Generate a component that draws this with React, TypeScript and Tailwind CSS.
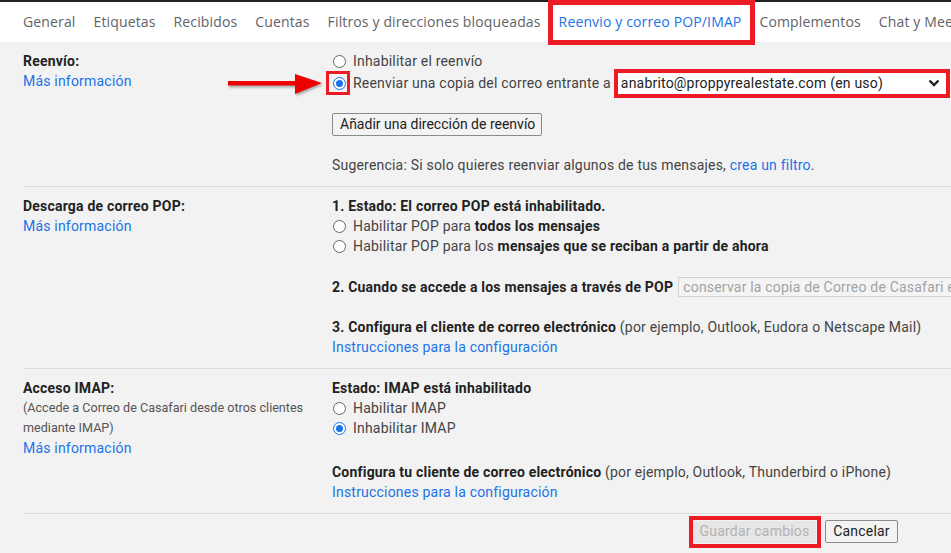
import type { ReactNode } from "react";

const tabs = [
  "General",
  "Etiquetas",
  "Recibidos",
  "Cuentas",
  "Filtros y direcciones bloqueadas",
  "Reenvio y correo POP/IMAP",
  "Complementos",
  "Chat y Meet",
];

const activeTab = "Reenvio y correo POP/IMAP";

const sectionCls = "grid grid-cols-[309px_1fr] border-b border-[#dedede] pt-[9px] pb-[11px]";
const labelCls = "h-[20px] leading-[20px] font-bold text-[#222]";
const linkCls = "h-[20px] leading-[20px] text-[#1a73e8]";
const lineCls = "flex h-[20px] items-center leading-[20px]";
const smallCls = "h-[20px] text-[12.6px] leading-[20px] tracking-normal text-[#555]";

function Radio({ checked = false }: { checked?: boolean }) {
  if (checked) {
    return (
      <span className="ml-[1px] mr-[7px] flex h-[13px] w-[13px] shrink-0 items-center justify-center rounded-full border-[1.5px] border-[#1a73e8] bg-white">
        <span className="h-[7px] w-[7px] rounded-full bg-[#1a73e8]" />
      </span>
    );
  }
  return (
    <span className="ml-[1px] mr-[7px] h-[13px] w-[13px] shrink-0 rounded-full border border-[#666] bg-white" />
  );
}

function RadioLine({ checked, children }: { checked?: boolean; children: ReactNode }) {
  return (
    <div className={lineCls}>
      <Radio checked={checked} />
      <span>{children}</span>
    </div>
  );
}

export default function App() {
  return (
    <div className="relative h-[553px] w-[951px] overflow-hidden whitespace-nowrap bg-[#f2f2f2] font-['Roboto',sans-serif] text-[14px] tracking-[0.2px] text-[#444]">
      <div className="h-[2px] bg-[#202124]" />

      {/* Tabs */}
      <nav className="flex h-[40px] items-center gap-[18px] bg-white pb-[2px] pl-[23px] font-['Open_Sans',sans-serif] text-[14px] tracking-[0.14px] text-[#5f6368]">
        {tabs.map((tab) => (
          <span key={tab} className={tab === activeTab ? "text-[#1a73e8]" : ""}>
            {tab}
          </span>
        ))}
      </nav>

      <div className="pl-[23px]">
        {/* Reenvío */}
        <section className={sectionCls}>
          <div>
            <div className={labelCls}>Reenvío:</div>
            <div className={linkCls}>Más información</div>
          </div>
          <div>
            <RadioLine>Inhabilitar el reenvío</RadioLine>
            <div className="flex h-[24px] items-center">
              <Radio checked />
              <span>Reenviar una copia del correo entrante a</span>
              <div className="ml-[3px] flex h-[29px] w-[336px] shrink-0 items-center justify-between border-[4px] border-[#ed1c24] bg-white pl-[3px] pr-[4px] text-[#222]">
                <span>anabrito@proppyrealestate.com (en uso)</span>
                <svg width="12" height="8" viewBox="0 0 12 8" className="mr-[2px]">
                  <polyline points="1.5,1.5 6,6 10.5,1.5" fill="none" stroke="#222" strokeWidth="2.4" />
                </svg>
              </div>
            </div>
            <button
              type="button"
              className="mt-[18px] flex h-[23px] w-[210px] items-center rounded-[2px] border border-[#8a8a8a] bg-[#f3f3f3] pl-[7px] tracking-normal text-[#222]"
            >
              Añadir una dirección de reenvío
            </button>
            <div className="mt-[19px] h-[20px] leading-[20px]">
              Sugerencia: Si solo quieres reenviar algunos de tus mensajes,{" "}
              <span className="text-[#1a73e8]">crea un filtro</span>.
            </div>
          </div>
        </section>

        {/* POP */}
        <section className={sectionCls}>
          <div>
            <div className={labelCls}>Descarga de correo POP:</div>
            <div className={linkCls}>Más información</div>
          </div>
          <div>
            <div className={labelCls}>1. Estado: El correo POP está inhabilitado.</div>
            <RadioLine>
              Habilitar POP para <b className="text-[#222]">todos los mensajes</b>
            </RadioLine>
            <RadioLine>
              Habilitar POP para los{" "}
              <b className="text-[#222]">mensajes que se reciban a partir de ahora</b>
            </RadioLine>
            <div className="mt-[21px] flex h-[20px] items-center">
              <b className="text-[#222]">2. Cuando se accede a los mensajes a través de POP</b>
              <div className="ml-[5px] flex h-[20px] w-[300px] shrink-0 items-center border border-[#d3d3d3] bg-[#f4f4f4] pl-[4px] text-[#a3a3a3]">
                conservar la copia de Correo de Casafari en Recibidos
              </div>
            </div>
            <div className="mt-[20px] h-[20px] leading-[20px]">
              <b className="text-[#222]">3. Configura el cliente de correo electrónico</b> (por
              ejemplo, Outlook, Eudora o Netscape Mail)
            </div>
            <div className={linkCls}>Instrucciones para la configuración</div>
          </div>
        </section>

        {/* IMAP */}
        <section className={sectionCls}>
          <div>
            <div className={labelCls}>Acceso IMAP:</div>
            <div className={smallCls}>(Accede a Correo de Casafari desde otros clientes</div>
            <div className={smallCls}>mediante IMAP)</div>
            <div className={linkCls}>Más información</div>
          </div>
          <div>
            <div className={labelCls}>Estado: IMAP está inhabilitado</div>
            <RadioLine>Habilitar IMAP</RadioLine>
            <RadioLine checked>Inhabilitar IMAP</RadioLine>
            <div className="mt-[24px] h-[20px] leading-[20px]">
              <b className="text-[#222]">Configura tu cliente de correo electrónico</b> (por
              ejemplo, Outlook, Thunderbird o iPhone)
            </div>
            <div className={linkCls}>Instrucciones para la configuración</div>
          </div>
        </section>

        {/* Footer buttons */}
        <div className="ml-[670px] mt-[6px] flex items-center gap-[9px]">
          <button
            type="button"
            disabled
            className="h-[22px] w-[123px] bg-[#e6e6e6] text-[#b3b3b3]"
          >
            Guardar cambios
          </button>
          <button
            type="button"
            className="h-[23px] w-[73px] rounded-[2px] border border-[#8a8a8a] bg-[#f3f3f3] text-[#222]"
          >
            Cancelar
          </button>
        </div>
      </div>

      {/* Annotations */}
      <div className="absolute left-[548px] top-0 h-[45px] w-[207px] border-[5px] border-[#ed1c24]" />
      <div className="absolute left-[326px] top-[71px] h-[24px] w-[24px] border-[3px] border-[#ed1c24]" />
      <div className="absolute left-[689px] top-[516px] h-[32px] w-[132px] border-[4px] border-[#ed1c24]" />
      <svg
        className="absolute left-[226px] top-[72px] drop-shadow-[1px_2px_1px_rgba(0,0,0,0.3)]"
        width="100"
        height="26"
        viewBox="0 0 100 26"
      >
        <rect x="2" y="9" width="70" height="4.5" fill="#ee0000" />
        <polygon points="69,2 96,11 69,22" fill="#ee0000" />
      </svg>
    </div>
  );
}
